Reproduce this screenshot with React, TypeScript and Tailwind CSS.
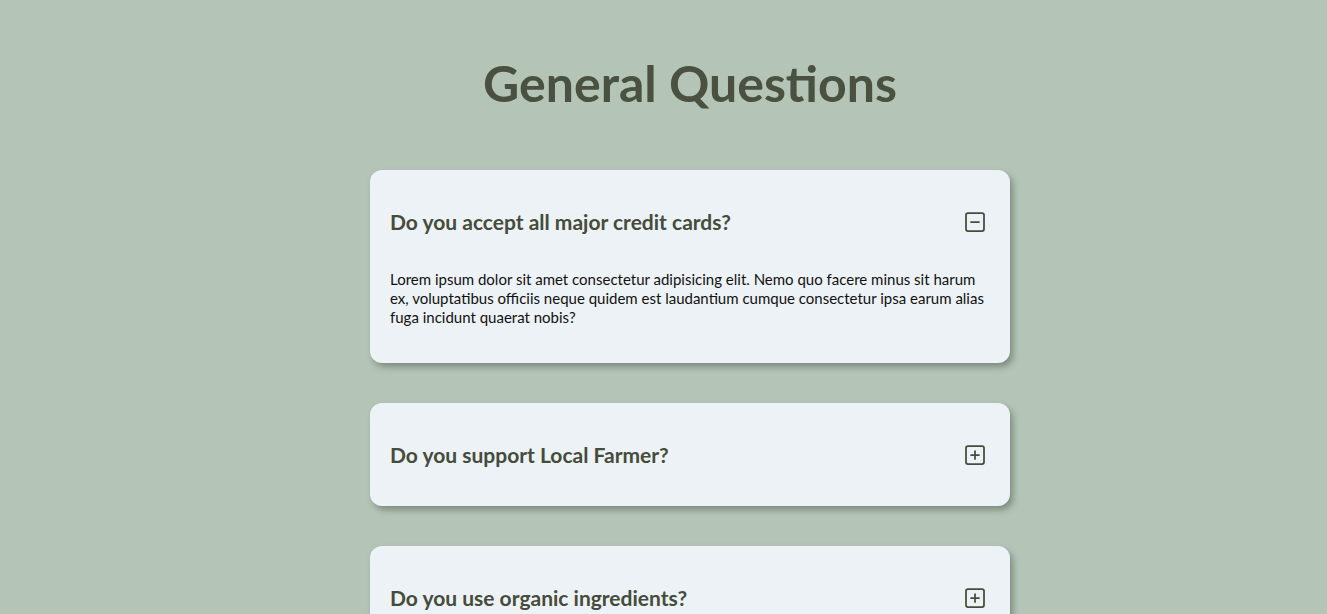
import React, { useState } from 'react';
import { SquareMinus, SquarePlus } from 'lucide-react';

const faqs = [
  {
    q: 'Do you accept all major credit cards?',
    a: 'Lorem ipsum dolor sit amet consectetur adipisicing elit. Nemo quo facere minus sit harum ex, voluptatibus officiis neque quidem est laudantium cumque consectetur ipsa earum alias fuga incidunt quaerat nobis?',
  },
  {
    q: 'Do you support Local Farmer?',
    a: 'Lorem ipsum dolor sit amet consectetur adipisicing elit. Nemo quo facere minus sit harum ex, voluptatibus officiis neque quidem est laudantium cumque consectetur ipsa earum alias fuga incidunt quaerat nobis?',
  },
  {
    q: 'Do you use organic ingredients?',
    a: 'Lorem ipsum dolor sit amet consectetur adipisicing elit. Nemo quo facere minus sit harum ex, voluptatibus officiis neque quidem est laudantium cumque consectetur ipsa earum alias fuga incidunt quaerat nobis?',
  },
];

const Question = ({ item, open, onToggle }) => {
  return (
    <div className="bg-[#edf2f6] rounded-xl shadow-[3px_4px_6px_rgba(60,70,55,0.45)]">
      <div className="flex items-center justify-between pl-5 pr-[23px] pt-10 pb-[39px]">
        <h4 className="text-[21px] leading-6 font-bold text-[#454c3b]">{item.q}</h4>
        <button onClick={onToggle} className="text-[#454c3b]">
          {open ? <SquareMinus size={24} strokeWidth={1.75} /> : <SquarePlus size={24} strokeWidth={1.75} />}
        </button>
      </div>
      {open && (
        <p className="px-5 pb-[36px] -mt-[3px] text-[15px] leading-[19px] text-[#111]">{item.a}</p>
      )}
    </div>
  );
};

export default function App() {
  const [openIndex, setOpenIndex] = useState(0);

  return (
    <div className="min-h-screen bg-[#b4c5b8] font-['Lato',sans-serif] flex justify-center pl-[53px]">
      <div className="w-[640px]">
        <h1 className="text-center text-[50px] leading-none font-bold text-[#4a5140] pt-[58px] pb-[62px]">
          General Questions
        </h1>
        <div className="flex flex-col gap-10">
          {faqs.map((item, i) => (
            <Question
              key={i}
              item={item}
              open={openIndex === i}
              onToggle={() => setOpenIndex(openIndex === i ? -1 : i)}
            />
          ))}
        </div>
      </div>
    </div>
  );
}
